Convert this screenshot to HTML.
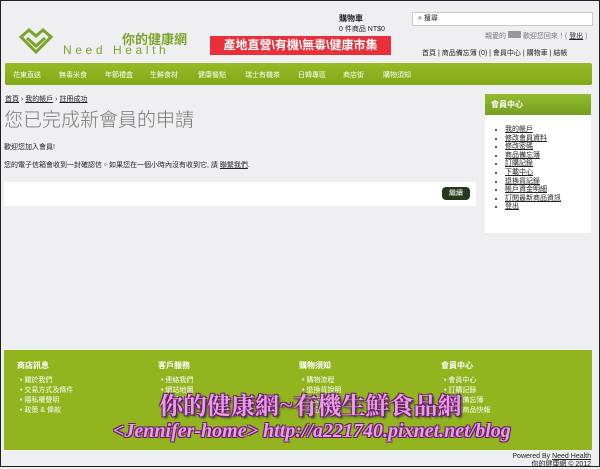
<!DOCTYPE html>
<html><head><meta charset="utf-8"><style>
*{margin:0;padding:0;box-sizing:border-box}
body{width:600px;height:467px;background:#efeff1;font-family:"Liberation Sans","Noto Sans CJK TC",sans-serif;position:relative;overflow:hidden;border:1px solid #222;font-size:7px;color:#222}
.a{position:absolute}
u{text-decoration:underline}
.nav{left:4px;top:62px;width:587px;height:22px;background:linear-gradient(#97bb26,#82a817);border-radius:2px;color:#fff;font-size:7px}
.nav span{position:absolute;top:7px}
.foot{left:3px;top:349px;width:588px;height:100px;background:#91b41f;color:#fff}
.foot b{position:absolute;top:10px;font-size:8px}
.foot ul{position:absolute;top:26px;list-style:none;font-size:7px;line-height:10px}
.foot li:before{content:"• ";}
</style></head><body>
<svg class="a" style="left:16px;top:26px" width="38" height="28" viewBox="0 0 38 28"><path d="M4 10 L12 3 L19 9 L26 3 L34 10 L19 25 Z M10 11 L19 19 L28 11" fill="none" stroke="#7aa32a" stroke-width="3"/></svg>
<div class="a" style="left:121px;top:28px;color:#7aa32a;font-size:13px;font-weight:bold">你的健康網</div>
<div class="a" style="left:62px;top:42px;color:#7aa32a;font-size:12px;letter-spacing:3.6px;font-family:'Liberation Sans',sans-serif">Need Health</div>
<div class="a" style="left:209px;top:35px;width:181px;height:19px;background:#e8303a;color:#fff;font-size:12px;font-weight:bold;text-align:center;line-height:19px">產地直營\有機\無毒\健康市集</div>
<div class="a" style="left:338px;top:12px;font-size:8px;font-weight:bold">購物車</div>
<div class="a" style="left:338px;top:23px;font-size:7px">0 件商品 NT$0</div>
<div class="a" style="left:411px;top:11px;width:181px;height:14px;background:#fff;border:1px solid #ccc;font-size:7px;line-height:12px;padding-left:5px">⌕ 搜尋</div>
<div class="a" style="left:484px;top:30px;font-size:7px;color:#777">親愛的 <span style="display:inline-block;width:13px;height:7px;background:#999"></span> 歡迎您回來！( <u style="color:#222">登出</u> )</div>
<div class="a" style="left:421px;top:47px;font-size:7px">首頁 | 商品備忘簿 (0) | 會員中心 | 購物車 | 結帳</div>
<div class="a nav"><span style="left:8px">花東直送</span><span style="left:54px">無毒米食</span><span style="left:100px">年節禮盒</span><span style="left:145px">生鮮食材</span><span style="left:193px">健康餐點</span><span style="left:240px">瑞士有機茶</span><span style="left:293px">日韓專區</span><span style="left:338px">商店街</span><span style="left:378px">購物須知</span></div>
<div class="a" style="left:4px;top:93px;font-size:7px"><u>首頁</u> › <u>我的帳戶</u> › <u>註冊成功</u></div>
<div class="a" style="left:3px;top:104px;font-size:19px;color:#777;font-weight:300">您已完成新會員的申請</div>
<div class="a" style="left:3px;top:141px">歡迎您加入會員!</div>
<div class="a" style="left:3px;top:159px">您的電子信箱會收到一封確認信。如果您在一個小時內沒有收到它, 請 <u>聯繫我們</u>.</div>
<div class="a" style="left:3px;top:181px;width:472px;height:24px;background:#fff"></div>
<div class="a" style="left:441px;top:186px;width:28px;height:13px;background:#26391a;border-radius:4px;color:#fff;font-size:7px;text-align:center;line-height:13px">繼續</div>
<div class="a" style="left:484px;top:93px;width:106px;height:139px;background:#fff"></div>
<div class="a" style="left:484px;top:93px;width:106px;height:21px;background:linear-gradient(#92bb30,#74a020);color:#fff;font-size:8px;font-weight:bold;padding:5px 0 0 6px">會員中心</div>
<ul class="a" style="left:504px;top:125px;font-size:7px;line-height:8.6px;list-style:disc"><li><u>我的帳戶</u></li><li><u>修改會員資料</u></li><li><u>修改密碼</u></li><li><u>商品備忘簿</u></li><li><u>訂購記錄</u></li><li><u>下載中心</u></li><li><u>退換貨記錄</u></li><li><u>帳戶資金明細</u></li><li><u>訂閱最新商品資訊</u></li><li><u>登出</u></li></ul>
<div class="a foot">
<b style="left:13px">商店訊息</b><ul style="left:16px"><li>關於我們</li><li>交易方式及條件</li><li>隱私權聲明</li><li>政策 &amp; 條款</li></ul>
<b style="left:154px">客戶服務</b><ul style="left:157px"><li>連絡我們</li><li>網站地圖</li><li>常見問題</li><li>常見問答</li></ul>
<b style="left:295px">購物須知</b><ul style="left:298px"><li>購物流程</li><li>退換貨說明</li><li>付款方式</li><li>配送方式</li></ul>
<b style="left:437px">會員中心</b><ul style="left:440px"><li>會員中心</li><li>訂購記錄</li><li>商品備忘簿</li><li>訂閱商品快報</li></ul>
</div>
<div class="a" style="left:158px;top:385px;font-size:24px;font-weight:bold;color:#e8a0e0;letter-spacing:0px;text-shadow:1px 1px 0 #6a1a70,-1px -1px 0 #6a1a70,1px -1px 0 #6a1a70,-1px 1px 0 #6a1a70,2px 2px 2px #333;font-family:'Noto Serif CJK SC',serif">你的健康網~有機生鮮食品網</div>
<div class="a" style="left:112px;top:419px;font-size:20px;font-style:italic;font-weight:bold;color:#e8a0e0;font-family:'Liberation Serif',serif;text-shadow:1px 1px 0 #6a1a70,-1px -1px 0 #6a1a70,1px -1px 0 #6a1a70,-1px 1px 0 #6a1a70">&lt;Jennifer-home&gt; http://a221740.pixnet.net/blog</div>
<div class="a" style="left:510px;top:452px;font-size:7px;text-align:right;width:80px;line-height:8px">Powered By <u>Need Health</u><br>你的健康網 © 2012</div>
</body></html>
